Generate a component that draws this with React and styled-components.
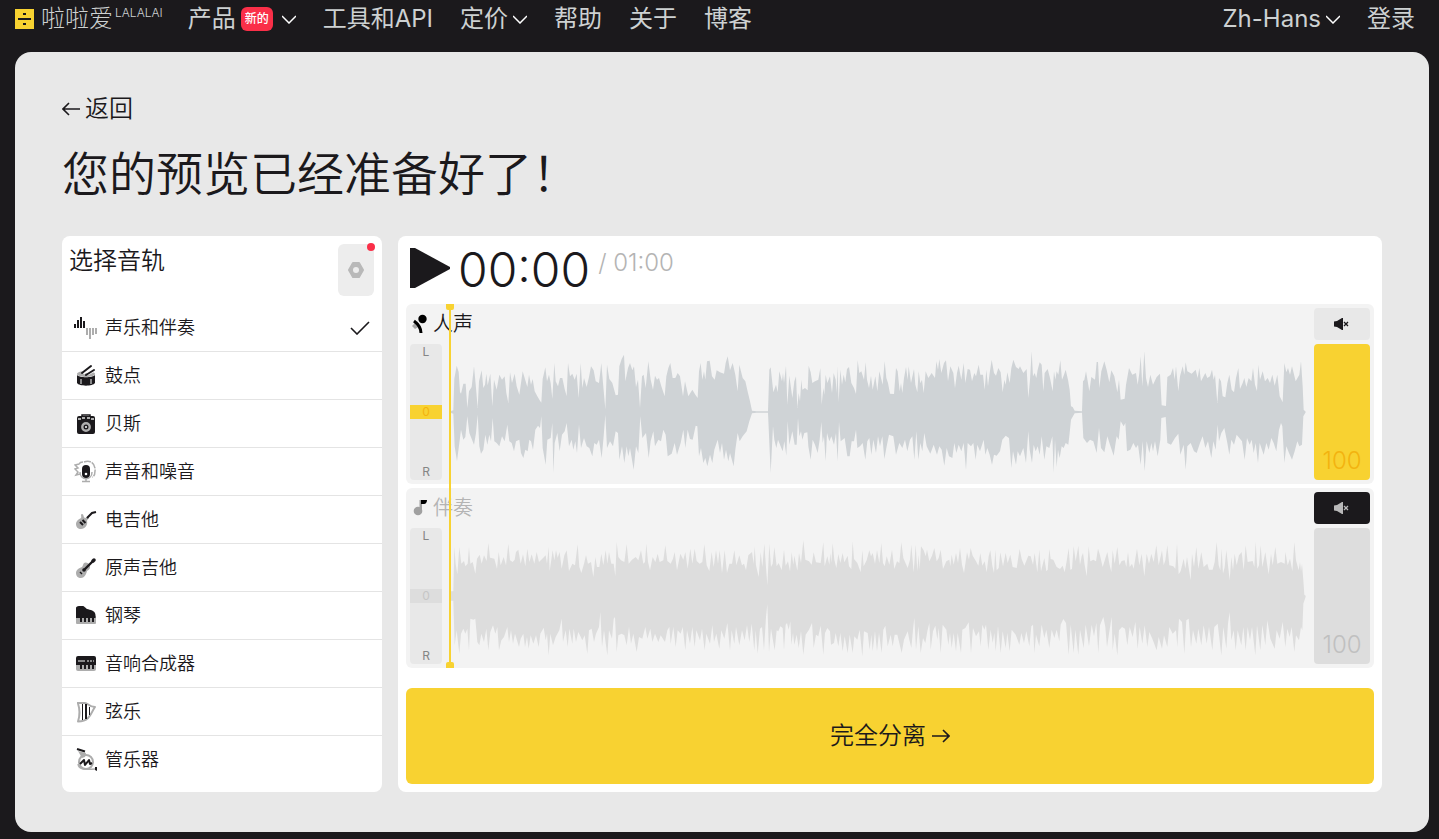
import { useState } from "react";
import styled, { createGlobalStyle, ThemeProvider } from "styled-components";

const theme = {
  ink: "#1b191c",
  page: "#e8e8e8",
  track: "#f3f3f3",
  grey: "#b4b4b4",
  yellow: "#f8d231",
  amber: "#f3b30f",
  red: "#fa2f48",
  nav: "#cdd1d2",
};

const GlobalStyle = createGlobalStyle`
  * {
    box-sizing: border-box;
  }

  body {
    margin: 0;
    background: ${theme.ink};
    color: ${theme.ink};
    font-family: Inter, "Noto Sans CJK SC", sans-serif;
    font-weight: 350;
  }

  button,
  input {
    font: inherit;
    color: inherit;
  }

  svg {
    display: block;
    flex-shrink: 0;
  }
`;

const Header = styled.header`
  display: flex;
  align-items: center;
  justify-content: space-between;
  height: 52px;
  padding: 0 24px 14px 15px;
  color: ${(p) => p.theme.nav};
  font-size: 24px;
  font-weight: 400;
  white-space: nowrap;
`;

const Nav = styled.nav`
  display: flex;
  align-items: center;
  gap: 27px;
`;

const Logo = styled.a`
  display: flex;
  align-items: center;
  gap: 7px;
  margin-right: -2px;
  color: inherit;
  font-weight: 300;
  text-decoration: none;
`;

const LogoText = styled.span`
  display: flex;
  align-items: flex-start;
  gap: 2px;
  line-height: 34px;

  small {
    font-size: 12px;
    line-height: 22px;
  }
`;

const NavLink = styled.a`
  display: flex;
  align-items: center;
  color: inherit;
  line-height: 34px;
  text-decoration: none;
`;

const NavButton = styled.button`
  display: flex;
  align-items: center;
  gap: 5px;
  padding: 0;
  border: 0;
  background: none;
  line-height: 34px;
`;

const Badge = styled.span`
  height: 24px;
  margin-right: 4px;
  padding: 0 4px;
  border-radius: 6px;
  background: ${(p) => p.theme.red};
  color: #fff;
  font-size: 12px;
  font-weight: 500;
  line-height: 24px;
`;

const Card = styled.main`
  margin: 0 10px 7px 15px;
  padding: 41px 47px 40px;
  border-radius: 16px;
  background: ${(p) => p.theme.page};
`;

const Back = styled.a`
  display: inline-flex;
  align-items: center;
  gap: 5px;
  color: inherit;
  font-size: 24px;
  line-height: 32px;
  text-decoration: none;
  vertical-align: top;
`;

const Title = styled.h1`
  margin: 17px 0 30px;
  font-size: 47px;
  font-weight: 350;
  line-height: 64px;
`;

const Columns = styled.div`
  display: grid;
  grid-template-columns: 320px 1fr;
  gap: 16px;
`;

const Panel = styled.section`
  border-radius: 8px;
  background: #fff;
`;

const PanelHead = styled.div`
  display: flex;
  align-items: flex-start;
  justify-content: space-between;
  height: 68px;
  padding: 8px 8px 8px 7px;

  h2 {
    margin: 0;
    font-size: 24px;
    font-weight: 350;
    line-height: 34px;
  }
`;

const Settings = styled.button`
  position: relative;
  display: grid;
  place-items: center;
  width: 36px;
  height: 52px;
  padding: 0;
  border: 0;
  border-radius: 6px;
  background: #ededed;

  &::after {
    content: "";
    position: absolute;
    top: -1px;
    right: -1px;
    width: 8px;
    height: 8px;
    border-radius: 50%;
    background: ${(p) => p.theme.red};
  }
`;

const StemList = styled.ul`
  margin: 0;
  padding: 0 0 8px;
  list-style: none;

  li + li {
    border-top: 1px solid #e4e4e4;
  }
`;

const Stem = styled.label`
  position: relative;
  display: flex;
  align-items: center;
  gap: 7px;
  height: 47px;
  padding: 0 12px;
  font-size: 18px;
  line-height: 24px;
  cursor: pointer;

  input {
    position: absolute;
    opacity: 0;
  }

  span {
    flex: 1;
  }
`;

const Player = styled(Panel)`
  padding: 8px;
`;

const Transport = styled.div`
  display: flex;
  align-items: flex-start;
  gap: 8px;
  height: 60px;
  padding: 4px;
`;

const PlayButton = styled.button`
  padding: 0;
  border: 0;
  background: none;
`;

const Time = styled.span`
  font-size: 48px;
  font-weight: 300;
  line-height: 44px;
`;

const Total = styled.span`
  color: ${(p) => p.theme.grey};
  font-size: 24px;
  font-weight: 300;
  line-height: 30px;
`;

const Tracks = styled.div`
  position: relative;
  display: grid;
  gap: 4px;
`;

const Playhead = styled.div`
  position: absolute;
  top: 0;
  bottom: 0;
  left: 43px;
  width: 2px;
  background: ${(p) => p.theme.yellow};

  &::before,
  &::after {
    content: "";
    position: absolute;
    left: -3px;
    width: 8px;
    height: 6px;
    background: ${(p) => p.theme.yellow};
  }

  &::before {
    top: 0;
    border-radius: 0 0 2px 2px;
  }

  &::after {
    bottom: 0;
    border-radius: 2px 2px 0 0;
  }
`;

const TrackBox = styled.div`
  display: grid;
  grid-template-columns: 32px 1fr 56px;
  grid-template-rows: 32px 136px;
  gap: 4px 8px;
  padding: 4px;
  border-radius: 6px;
  background: ${(p) => p.theme.track};
`;

const TrackName = styled.div`
  grid-column: 1 / 3;
  display: flex;
  align-items: center;
  gap: 5px;
  padding-left: 2px;
  color: ${(p) => (p.$muted ? p.theme.grey : p.theme.ink)};
  font-size: 20px;
  line-height: 28px;
`;

const MuteButton = styled.button`
  display: grid;
  place-items: center;
  padding: 0;
  border: 0;
  border-radius: 4px;
  background: ${(p) => (p.$muted ? p.theme.ink : "#e8e8e8")};
  color: ${(p) => (p.$muted ? "#b9b9b9" : p.theme.ink)};
`;

const Slider = styled.input`
  position: absolute;
  inset: 0;
  width: 100%;
  height: 100%;
  margin: 0;
  opacity: 0;
  writing-mode: vertical-lr;
  cursor: pointer;
`;

const Pan = styled.label`
  position: relative;
  display: flex;
  flex-direction: column;
  align-items: stretch;
  justify-content: space-between;
  border-radius: 4px;
  background: #e8e8e8;
  color: #858585;
  font-size: 12px;
  font-weight: 400;
  line-height: 16px;
  text-align: center;

  b {
    background: ${(p) => (p.$muted ? "#dddddd" : p.theme.yellow)};
    color: ${(p) => (p.$muted ? "#c6c6c6" : p.theme.amber)};
    font-weight: 400;
    line-height: 14px;
  }
`;

const Volume = styled.label`
  position: relative;
  display: flex;
  align-items: flex-end;
  justify-content: center;
  padding-bottom: 3px;
  border-radius: 4px;
  background: ${(p) => (p.$muted ? "#dddddd" : p.theme.yellow)};
  color: ${(p) => (p.$muted ? "#c0c0c0" : p.theme.amber)};
  font-size: 24px;
  font-weight: 300;
  line-height: 32px;
`;

const Wave = styled.svg`
  width: 100%;
  height: 136px;
  fill: ${(p) => (p.$muted ? "#dddddd" : "#cfd3d6")};
`;

const SplitButton = styled.button`
  display: flex;
  align-items: center;
  justify-content: center;
  gap: 6px;
  width: 100%;
  height: 96px;
  margin-top: 20px;
  border: 0;
  border-radius: 6px;
  background: ${(p) => p.theme.yellow};
  font-size: 24px;
  line-height: 32px;
`;

// Each wave is a list of "x,height" points above and below the centre line.
const vocalWave = {
  top: `3,3 10,5 13,100 20,139 26,120 30,60 33,55 40,85 47,85 52,12 57,62 65,75 72,137 78,72 83,12 87,92 95,125 100,72 105,82 109,115 113,80 121,115 127,17 132,97 140,67 148,112 156,97 164,107 169,57 175,27 180,119 186,87 194,115 200,77 208,52 218,122 224,102 232,75 237,112 243,82 248,99 254,62 262,47 270,34 274,28 278,99 286,134 291,92 297,112 302,87 307,40 313,147 317,92 324,77 330,102 337,102 344,69 350,47 354,147 360,107 367,115 374,97 380,115 386,42 392,147 397,72 402,102 410,75 417,105 423,137 431,125 437,92 447,87 454,147 459,87 466,8 471,142 478,99 487,87 497,50 504,52 508,137 515,159 522,172 526,92 534,132 540,147 547,125 552,137 558,75 564,97 570,12 576,107 581,112 587,72 595,152 602,97 609,67 615,109 621,97 627,102 634,77 644,47 649,107 655,132 661,147 668,102 676,102 683,117 690,107 699,47 705,92 715,47 727,67 736,52 743,42 747,122 752,147 757,97 762,122 766,97 771,152 779,154 786,107 794,97 800,125 810,119 822,115 827,147 833,167 840,125 848,147 856,112 863,62 868,142 878,102 886,92 894,57 900,32 906,4 920,2 954,2 958,127 962,134 970,59 978,82 983,59 988,122 996,92 999,117 1002,87 1008,139 1012,22 1018,109 1027,42 1033,92 1038,107 1042,12 1046,57 1050,32 1054,97 1057,67 1065,72 1073,65 1076,139 1082,119 1087,87 1095,92 1105,97 1111,132 1115,22 1120,72 1123,52 1127,112 1132,87 1140,107 1146,57 1151,117 1157,97 1160,57 1162,137 1166,30 1171,127 1176,82 1181,112 1186,89 1191,129 1197,135 1204,87 1212,72 1218,54 1223,155 1228,117 1234,122 1242,97 1247,149 1251,97 1257,72 1263,109 1268,67 1276,107 1282,62 1288,122 1298,82 1304,152 1309,102 1314,87 1320,55 1332,54 1338,132 1343,122 1349,62 1353,87 1357,57 1362,102 1368,135 1373,97 1376,137 1383,87 1392,129 1396,82 1402,59 1406,122 1411,86 1416,97 1421,57 1427,122 1435,102 1445,117 1455,102 1459,152 1464,127 1468,159 1474,117 1482,147 1488,155 1494,92 1501,137 1510,117 1515,72 1521,117 1526,139 1534,97 1541,147 1546,87 1553,129 1560,127 1566,92 1573,117 1578,107 1586,142 1591,112 1599,112 1604,67 1609,127 1614,77 1619,117 1625,157 1632,117 1638,109 1645,132 1652,119 1658,59 1663,97 1667,82 1672,119 1679,87 1684,132 1690,157 1698,135 1706,129 1710,137 1720,117 1730,129 1735,42 1740,97 1745,182 1749,107 1754,117 1759,102 1763,127 1769,149 1775,142 1780,62 1784,117 1793,129 1800,102 1808,62 1812,122 1816,97 1820,122 1825,112 1831,155 1836,97 1842,112 1847,127 1854,97 1859,67 1863,17 1868,15 1874,4 1896,2 1899,92 1903,97 1908,122 1914,87 1918,62 1924,105 1935,97 1940,150 1944,150 1948,72 1954,122 1963,152 1970,127 1978,89 1984,125 1993,107 2002,59 2007,97 2012,37 2024,40 2028,82 2037,132 2047,112 2058,117 2063,82 2068,117 2072,167 2077,77 2083,182 2088,102 2094,75 2101,112 2109,82 2120,105 2130,115 2135,20 2148,18 2152,105 2162,112 2169,132 2174,97 2178,137 2185,62 2190,107 2198,137 2203,112 2207,149 2212,122 2225,115 2237,127 2243,102 2248,132 2253,92 2266,117 2272,102 2280,107 2286,127 2291,97 2295,112 2302,27 2307,102 2313,92 2318,47 2326,44 2332,87 2338,112 2345,67 2352,59 2358,102 2365,132 2370,69 2378,87 2383,102 2389,75 2396,102 2404,92 2409,132 2415,82 2421,62 2425,142 2430,97 2438,122 2445,92 2453,102 2460,87 2467,112 2474,79 2482,112 2489,47 2498,29 2503,147 2509,119 2514,132 2520,112 2526,137 2537,92 2548,112 2553,152 2558,77 2561,7 2567,1`,
  bottom: `3,3 10,5 14,103 21,148 28,93 33,53 40,83 46,75 52,13 58,63 72,98 78,63 83,8 88,103 93,125 100,113 106,68 112,98 118,68 123,88 128,18 133,88 140,93 148,103 156,73 164,88 172,38 178,88 185,93 192,118 198,88 208,83 213,123 220,138 226,113 233,118 238,83 243,88 249,113 256,53 264,41 270,48 274,13 278,108 287,158 292,83 302,78 307,33 310,183 314,93 322,63 329,118 336,68 344,58 350,33 357,103 365,83 370,113 376,88 381,123 387,38 393,108 402,78 410,103 418,108 427,133 433,93 440,98 447,83 455,138 461,73 466,8 471,108 480,88 489,103 497,58 504,63 508,143 516,103 523,153 530,103 535,133 540,108 551,173 558,103 565,123 571,13 577,78 588,63 596,138 602,88 610,58 615,103 625,83 633,88 640,53 647,68 653,133 665,125 674,93 681,128 692,93 700,53 706,108 713,53 720,81 728,83 737,41 742,43 747,133 753,108 760,153 766,138 772,163 780,128 787,153 793,113 803,83 810,123 816,93 822,143 828,113 835,148 840,123 851,163 856,113 863,63 869,88 878,73 890,58 898,28 906,4 920,2 954,2 958,93 962,183 969,43 973,83 979,108 984,83 998,118 1003,88 1009,131 1013,28 1018,98 1027,58 1034,98 1040,98 1044,18 1048,73 1053,58 1057,83 1063,63 1072,61 1075,103 1082,143 1088,83 1095,98 1103,123 1109,83 1114,30 1118,93 1122,73 1127,148 1131,63 1138,88 1144,73 1152,98 1158,63 1163,148 1167,30 1172,88 1184,78 1192,133 1199,133 1205,88 1212,88 1218,53 1222,108 1230,103 1238,93 1246,143 1252,88 1258,78 1264,128 1270,83 1278,123 1284,73 1290,103 1297,73 1303,141 1309,108 1317,68 1330,73 1338,128 1348,93 1357,108 1365,83 1372,118 1380,83 1387,73 1393,143 1399,58 1405,143 1411,93 1417,118 1423,63 1430,103 1441,125 1451,98 1461,128 1468,103 1475,113 1483,161 1490,108 1497,133 1507,138 1513,93 1519,123 1526,98 1534,118 1541,93 1548,173 1553,93 1563,103 1570,93 1577,143 1582,98 1590,118 1601,83 1606,128 1612,108 1619,128 1626,158 1632,128 1640,131 1650,118 1657,83 1667,71 1677,78 1684,168 1689,118 1698,158 1703,118 1710,133 1720,108 1728,153 1735,58 1739,113 1746,153 1751,98 1757,118 1763,103 1769,128 1775,73 1783,143 1789,103 1798,108 1807,73 1811,183 1815,83 1820,165 1824,113 1829,138 1835,103 1841,108 1847,93 1855,98 1859,63 1863,23 1874,4 1896,2 1900,78 1911,93 1920,83 1930,88 1940,123 1947,48 1953,108 1963,121 1972,73 1980,98 1991,131 2000,73 2006,83 2012,28 2021,43 2026,33 2031,118 2041,113 2050,93 2058,108 2064,98 2072,158 2078,88 2084,178 2090,88 2098,123 2104,93 2109,118 2115,88 2123,133 2131,83 2134,18 2147,15 2152,93 2163,98 2175,78 2185,65 2191,128 2201,98 2207,173 2212,103 2222,93 2232,118 2240,123 2250,93 2258,73 2266,108 2274,88 2284,138 2290,88 2297,113 2303,38 2307,88 2314,63 2323,48 2332,93 2338,128 2344,83 2352,98 2360,68 2368,78 2376,88 2384,143 2391,78 2399,98 2405,83 2411,123 2417,93 2424,153 2429,93 2441,128 2449,93 2456,113 2464,78 2471,93 2479,118 2487,53 2493,33 2497,43 2503,153 2509,103 2517,123 2526,143 2534,118 2542,88 2548,103 2556,98 2560,13 2567,1`,
};

const backingWave = {
  top: `3,14 10,14 13,147 17,97 22,65 28,147 34,97 42,105 46,89 53,97 57,147 61,97 68,102 76,67 81,112 89,124 95,97 102,122 110,105 115,159 120,115 133,112 141,82 146,132 152,92 161,117 168,92 175,157 180,107 188,102 194,109 198,132 205,139 212,97 219,125 226,89 232,142 238,102 245,125 253,97 260,132 267,102 277,112 287,122 291,97 296,147 299,75 303,102 308,137 313,107 318,137 323,115 329,132 335,82 343,122 350,137 357,75 367,97 375,92 383,155 388,87 394,69 402,97 408,122 414,97 423,102 430,57 436,117 441,87 448,87 454,127 460,92 467,137 472,97 477,132 484,97 491,97 496,59 500,162 505,117 513,107 523,102 530,155 536,97 546,109 557,117 565,107 573,137 580,97 585,102 589,157 594,102 600,77 608,117 616,102 623,127 629,102 640,107 646,152 652,105 662,97 669,112 674,132 681,77 691,127 700,109 706,132 713,82 721,142 727,97 734,142 740,105 749,97 757,102 763,155 770,92 778,75 785,132 791,87 798,137 804,97 809,137 816,69 824,137 831,69 838,97 846,97 853,137 859,92 868,122 876,92 882,97 888,77 895,122 906,132 911,97 914,149 918,92 926,57 932,132 937,87 943,157 948,87 952,32 958,157 963,87 968,97 973,147 980,89 986,99 995,77 1002,139 1007,91 1014,104 1020,74 1025,131 1030,94 1033,121 1042,76 1047,129 1053,99 1060,167 1066,109 1077,104 1085,94 1091,131 1098,101 1112,99 1120,161 1124,89 1132,119 1138,94 1141,129 1144,99 1148,159 1153,109 1159,84 1165,126 1171,99 1178,129 1183,101 1193,121 1197,89 1204,81 1208,164 1212,111 1222,99 1232,71 1237,137 1241,89 1250,107 1258,137 1263,119 1268,129 1275,97 1281,137 1288,99 1294,159 1299,99 1304,89 1310,119 1318,94 1326,139 1333,81 1341,104 1348,99 1354,161 1360,114 1373,84 1380,109 1384,154 1391,71 1397,154 1402,75 1406,124 1409,79 1413,149 1421,137 1427,119 1431,139 1438,104 1446,121 1453,144 1460,104 1466,114 1472,139 1479,81 1489,104 1498,109 1501,89 1505,124 1511,94 1518,129 1524,99 1530,144 1536,94 1542,69 1551,131 1557,109 1562,144 1568,121 1578,104 1585,91 1591,129 1597,91 1604,104 1610,71 1616,119 1621,137 1627,91 1632,69 1636,139 1640,77 1646,84 1651,131 1659,89 1667,129 1673,99 1681,124 1688,87 1700,84 1709,141 1715,111 1723,91 1735,121 1742,119 1749,94 1754,129 1762,71 1768,139 1773,74 1783,114 1789,74 1793,79 1798,141 1802,111 1810,109 1820,87 1830,81 1838,91 1844,71 1850,104 1856,144 1861,79 1866,81 1871,149 1877,104 1885,151 1890,94 1895,119 1899,129 1904,94 1910,59 1916,149 1921,104 1930,109 1938,104 1944,142 1950,122 1958,87 1972,132 1978,97 1984,72 1988,137 1994,97 2002,147 2008,92 2015,105 2024,107 2029,87 2034,132 2039,87 2046,97 2051,82 2061,142 2068,92 2075,127 2083,59 2090,127 2097,97 2104,127 2111,102 2119,152 2126,92 2136,137 2141,92 2146,107 2152,152 2158,92 2170,89 2176,82 2181,157 2186,65 2192,75 2201,112 2206,82 2211,117 2222,47 2226,127 2232,87 2239,147 2245,82 2254,132 2261,87 2272,97 2277,79 2288,79 2294,102 2300,162 2306,92 2311,77 2315,142 2319,67 2324,87 2329,137 2339,47 2344,117 2349,77 2354,127 2360,92 2367,122 2375,132 2381,77 2387,152 2393,102 2408,105 2413,87 2417,162 2422,82 2427,92 2432,152 2437,87 2446,132 2451,97 2456,65 2463,127 2468,92 2476,147 2482,97 2493,102 2504,97 2506,132 2513,92 2520,112 2527,75 2533,162 2538,107 2546,77 2550,102 2553,75 2556,97 2560,47 2563,4 2567,1`,
  bottom: `3,14 10,14 14,148 20,103 28,173 33,113 40,98 46,113 52,98 57,163 61,68 70,71 76,68 82,138 88,148 94,113 102,138 109,98 115,163 121,108 129,88 136,113 142,93 147,163 154,133 162,123 172,93 177,138 183,103 189,143 195,113 207,153 212,128 220,113 225,153 231,123 236,158 242,118 250,143 258,118 266,153 271,113 281,95 287,133 291,113 296,178 301,113 309,148 317,123 328,103 335,68 339,138 347,103 353,153 358,98 367,143 371,98 378,138 385,108 397,133 404,118 412,173 417,103 425,98 432,138 438,113 447,93 451,48 456,153 462,103 472,178 477,103 486,128 491,68 495,63 500,168 505,118 515,113 523,118 530,148 537,93 543,143 550,113 560,168 567,123 577,128 586,93 592,128 601,98 607,138 615,113 625,138 632,118 645,138 652,103 658,93 662,143 670,93 677,153 683,103 692,113 698,93 706,163 711,103 720,143 727,93 734,153 739,103 750,133 756,98 764,163 769,113 780,143 787,88 792,138 799,113 808,158 814,103 823,128 832,81 840,163 845,103 853,143 858,93 868,148 876,103 884,133 891,88 898,138 905,83 913,163 917,103 923,173 930,98 936,93 942,163 948,63 952,25 957,168 963,98 974,163 980,103 985,106 991,91 998,96 1002,161 1007,86 1011,81 1016,101 1021,76 1024,146 1029,111 1033,146 1040,116 1046,156 1053,106 1060,176 1067,116 1077,101 1086,81 1091,156 1098,116 1105,121 1112,89 1120,176 1125,111 1132,96 1140,106 1143,146 1152,141 1157,111 1165,151 1171,111 1178,166 1184,121 1193,171 1199,116 1208,171 1213,121 1222,131 1229,101 1237,181 1242,106 1253,111 1259,161 1264,116 1268,166 1275,106 1281,166 1287,111 1295,171 1300,101 1306,89 1313,151 1322,116 1328,151 1334,116 1342,116 1355,171 1362,131 1373,106 1378,131 1384,156 1389,101 1393,66 1398,161 1405,91 1412,171 1419,126 1426,141 1432,106 1438,81 1442,161 1449,106 1456,89 1462,131 1466,96 1472,171 1478,86 1489,101 1495,146 1500,111 1505,156 1511,111 1518,166 1523,111 1533,171 1537,101 1546,96 1556,79 1563,171 1569,96 1578,121 1587,106 1592,151 1597,86 1603,101 1608,86 1615,161 1622,101 1628,141 1633,111 1637,166 1644,91 1652,171 1658,106 1667,156 1672,111 1679,166 1685,101 1697,116 1708,146 1714,111 1722,141 1729,106 1738,151 1744,91 1749,86 1753,171 1758,116 1768,151 1775,86 1783,126 1789,101 1798,156 1805,101 1813,126 1820,101 1828,136 1832,86 1840,69 1848,81 1856,176 1862,86 1871,171 1876,101 1885,176 1890,101 1901,156 1907,86 1917,151 1925,86 1932,121 1939,81 1945,171 1950,88 1960,63 1966,93 1971,153 1977,113 1985,63 1988,163 1994,113 2002,178 2007,103 2016,93 2025,98 2032,148 2039,93 2048,123 2056,78 2063,158 2069,93 2077,143 2084,88 2092,153 2098,108 2107,128 2120,163 2126,123 2136,158 2142,118 2152,153 2158,93 2168,113 2178,103 2182,153 2187,68 2196,78 2203,173 2209,73 2216,68 2223,153 2229,103 2239,143 2245,98 2254,148 2261,88 2270,143 2277,93 2287,163 2293,93 2303,83 2314,178 2320,93 2329,158 2334,83 2339,48 2344,133 2351,103 2357,163 2363,103 2374,148 2380,93 2387,163 2393,93 2400,133 2406,93 2416,178 2421,88 2431,163 2437,88 2446,148 2452,73 2461,128 2474,158 2480,103 2489,128 2498,78 2506,153 2512,98 2519,123 2525,93 2533,168 2538,118 2547,133 2553,93 2557,103 2560,23 2567,2`,
};

const parse = (list) => list.split(" ").map((pair) => pair.split(",").map(Number));

const outline = ({ top, bottom }) => {
  const upper = parse(top).map(([x, h]) => `${x},${-h}`);
  const lower = parse(bottom).reverse().map(([x, h]) => `${x},${h}`);
  return [...upper, ...lower].join(" ");
};

const dark = theme.ink;
const soft = "#adadad";

const icons = {
  vocals: (
    <>
      <path fill={dark} d="M0 8h2v4H0zM3 4h2v8H3zM6 1h2v11H6zM9 5h2v7H9z" />
      <path fill={soft} d="M12 12h2v7h-2zM15 12h2v11h-2zM18 12h2v7h-2zM21 12h2v6h-2z" />
    </>
  ),
  drums: (
    <>
      <path fill={soft} d="M3 10C3 6 21 6 21 10s-18 4-18 0z" />
      <path fill={dark} d="M3 11c2 3 16 3 18 0v8c-2 3.500-16 3.500-18 0z" />
      <path stroke={soft} strokeWidth="1.500" d="M7 15v5M17 15v5" />
      <path stroke="#fff" strokeWidth="3.500" d="m9 9 8-6M13 10l7-4" />
      <path stroke={dark} strokeWidth="2" strokeLinecap="round" d="m8 9 9-7M12 11l8-5" />
    </>
  ),
  bass: (
    <>
      <path fill="none" stroke={dark} strokeWidth="1.500" d="M8 5V3h8v2" />
      <path fill={dark} d="M5 4h14a2 2 0 0 1 2 2v14a2 2 0 0 1-2 2H5a2 2 0 0 1-2-2V6a2 2 0 0 1 2-2z" />
      <path fill={soft} d="M4 6h3v2H4zM8 5h3v2H8zM13 5h3v2h-3zM17 6h3v2h-3z" />
      <circle cx="12" cy="15" r="3.700" fill="none" stroke={soft} strokeWidth="2.400" />
      <circle cx="12" cy="15" r="1" fill="#fff" />
    </>
  ),
  voice: (
    <>
      <path fill="none" stroke={soft} strokeWidth="1.500" d="M9 2C6 2 5 4 5 4L1 5l3 3-3 1 3 3-2 3 4-1" />
      <path fill="none" stroke={soft} strokeWidth="1.500" strokeDasharray="7 1" d="M10 2c7-3 12 3 11 9 0 5-2 6-3 6" />
      <path fill="none" stroke={soft} strokeWidth="1.500" d="M6 12c0 9 12 9 12 0M12 18v4M8 21.500h8" />
      <rect x="8" y="5" width="8" height="13" rx="4" fill={dark} />
      <circle cx="12" cy="14" r="1.300" fill="#fff" />
    </>
  ),
  electric: (
    <>
      <path fill={soft} d="M8 6c2 0 1 3 3 4 2 0 4-2 4 0 0 1-2 1-2 3 1 4-2 8-6 8-3 0-5-2-5-5s3-5 5-6c1-1-1-4 1-4z" />
      <path stroke={soft} strokeWidth="2" d="m10 14 4-5" />
      <path stroke={dark} strokeWidth="2" d="m13 10 5-5 4-1" fill="none" />
      <path stroke={dark} strokeWidth="2" d="m8.500 12 3 3M6 14l3 3" />
    </>
  ),
  acoustic: (
    <>
      <path fill={soft} d="M10 7c3-2 7 2 6 5-1 2-2 2-3 3-1 4-3 7-6 7-3 0-5-2-5-5s3-5 6-6c1-1 1-3 2-4z" />
      <circle cx="10" cy="14" r="1.800" fill={dark} />
      <path stroke={dark} strokeWidth="2.400" d="m10 14 9-9" />
      <path stroke={dark} strokeWidth="3.500" strokeLinecap="round" d="m19 5 1-1" />
      <path stroke={dark} strokeWidth="1.500" d="m6 16 2 2" />
    </>
  ),
  piano: (
    <>
      <path fill={soft} d="M2 12h20v7a1 1 0 0 1-1 1H3a1 1 0 0 1-1-1z" />
      <path fill={dark} d="M2 14V4c0-1 1-2 3-2h3c3 0 3 2 5 3 3 1 8 1 8.500 6v3H20v4h-2v-4h-2v4h-2v-4h-2v4h-2v-4H8v4H6v-4H4v0z" />
    </>
  ),
  synth: (
    <>
      <path fill={soft} d="M2 12h20v5a2 2 0 0 1-2 2H4a2 2 0 0 1-2-2z" />
      <path fill={dark} d="M4 4h16a2 2 0 0 1 2 2v7h-2v4h-2v-4h-2v4h-2v-4h-2v4h-2v-4H8v4H6v-4H2V6a2 2 0 0 1 2-2z" />
      <path stroke={soft} strokeWidth="1.500" d="M4 9h7M13 9h2M16 9h2M19 9h1" />
    </>
  ),
  strings: (
    <>
      <path fill="none" stroke={soft} strokeWidth="2" strokeLinejoin="round" d="M3 3h8c3 0 4 4 10 4-3 4-3 7-7 11-2 2-5 3.500-10 3.500 2-6 2-12 0-18" />
      <path fill={dark} d="M8 4h1v16H8zM11 4h2v15h-2zM15 7h1v8h-1z" />
    </>
  ),
  wind: (
    <>
      <path fill={soft} d="m4 3 8 2-1 4-3 1z" />
      <path stroke={dark} strokeWidth="2" d="m3 1 8 2.500" />
      <circle cx="12" cy="14" r="7" fill="none" stroke={soft} strokeWidth="2" />
      <path fill="none" stroke={soft} strokeWidth="1.500" d="M4 16c1 5 5 6 17 5" />
      <path fill="none" stroke={dark} strokeWidth="2" strokeLinejoin="round" d="m6 16 4-4 1 5 4-5 1 4 2-1" />
      <path fill={dark} d="M21 19h2v4l-2-1z" />
    </>
  ),
};

const stems = [
  ["vocals", "声乐和伴奏"],
  ["drums", "鼓点"],
  ["bass", "贝斯"],
  ["voice", "声音和噪音"],
  ["electric", "电吉他"],
  ["acoustic", "原声吉他"],
  ["piano", "钢琴"],
  ["synth", "音响合成器"],
  ["strings", "弦乐"],
  ["wind", "管乐器"],
];

const Chevron = () => (
  <svg width="14" height="9" viewBox="0 0 14 9" fill="none" stroke="#fff" strokeWidth="1.500">
    <path d="m0 1 7 7 7-7" />
  </svg>
);

const Arrow = ({ left }) => (
  <svg width="18" height="14" viewBox="0 0 18 14" fill="none" stroke={dark} strokeWidth="1.600">
    <path d={left ? "M18 7H1M7 1 1 7l6 6" : "M0 7h17M11 1l6 6-6 6"} />
  </svg>
);

const MuteIcon = () => (
  <svg width="16" height="12" viewBox="0 0 16 12" fill="currentColor">
    <path d="M0 3.500 3 3l5-3h1v12H8L3 9 0 8.500z" />
    <path d="m10 4 4 4M14 4l-4 4" stroke="currentColor" strokeWidth="1.300" />
  </svg>
);

const MicIcon = () => (
  <svg width="16" height="20" viewBox="0 0 16 20">
    <path fill="#a8a8a8" d="m5 7 3 5-5 3-3-3z" />
    <circle cx="10.500" cy="5" r="4.200" fill="#000" />
    <path fill="none" stroke="#000" strokeWidth="3" d="M2 7c4 3 7 6 7 12" />
  </svg>
);

const NoteIcon = () => (
  <svg width="16" height="20" viewBox="0 0 16 20">
    <circle cx="6" cy="13" r="4.300" fill="#a0a0a0" />
    <path fill="#a0a0a0" d="M7.500 2H10v11H7.500z" />
    <path d="M9 2h6c0 2-1 4-3 4H9z" />
  </svg>
);

function Track({ name, icon, wave, muted, onMute }) {
  return (
    <TrackBox>
      <TrackName $muted={muted}>
        {icon}
        {name}
      </TrackName>
      <MuteButton $muted={muted} onClick={onMute} aria-label="静音">
        <MuteIcon />
      </MuteButton>
      <Pan $muted={muted}>
        <span>L</span>
        <b>0</b>
        <span>R</span>
        <Slider type="range" min="-100" max="100" defaultValue="0" aria-label={`${name} L R`} />
      </Pan>
      <Wave viewBox="0 -204 2568 408" preserveAspectRatio="none" $muted={muted}>
        <polygon points={outline(wave)} />
      </Wave>
      <Volume $muted={muted}>
        100
        <Slider type="range" min="0" max="100" defaultValue="100" aria-label={`${name} 音量`} />
      </Volume>
    </TrackBox>
  );
}

function App() {
  const [stem, setStem] = useState("vocals");
  const [muted, setMuted] = useState({ vocals: false, backing: true });

  const toggle = (key) => setMuted({ ...muted, [key]: !muted[key] });

  return (
    <ThemeProvider theme={theme}>
      <GlobalStyle />
      <Header>
        <Nav>
          <Logo href="#">
            <svg width="19" height="20" viewBox="0 0 19 20">
              <path fill={theme.yellow} d="M0 0h19v20H0z" />
              <path fill={dark} d="M3 9h13v2H3zM8 4h3v2H8zM8 14h3v2H8z" />
            </svg>
            <LogoText>
              啦啦爱<small>LALALAI</small>
            </LogoText>
          </Logo>
          <NavButton>
            产品
            <Badge>新的</Badge>
            <Chevron />
          </NavButton>
          <NavLink href="#">工具和API</NavLink>
          <NavButton>
            定价
            <Chevron />
          </NavButton>
          <NavLink href="#">帮助</NavLink>
          <NavLink href="#">关于</NavLink>
          <NavLink href="#">博客</NavLink>
        </Nav>
        <Nav>
          <NavButton>
            Zh-Hans
            <Chevron />
          </NavButton>
          <NavLink href="#">登录</NavLink>
        </Nav>
      </Header>

      <Card>
        <Back href="#">
          <Arrow left />
          返回
        </Back>
        <Title>您的预览已经准备好了！</Title>

        <Columns>
          <Panel>
            <PanelHead>
              <h2>选择音轨</h2>
              <Settings aria-label="设置">
                <svg width="16" height="16" viewBox="0 0 16 16">
                  <path
                    fill="#b9b9b9"
                    stroke="#b9b9b9"
                    strokeWidth="2"
                    strokeLinejoin="round"
                    d="M5 1h6l4 7-4 7H5L1 8z"
                  />
                  <circle cx="8" cy="8" r="3" fill="#ededed" />
                </svg>
              </Settings>
            </PanelHead>
            <StemList>
              {stems.map(([id, label]) => (
                <li key={id}>
                  <Stem>
                    <input type="radio" name="stem" checked={stem === id} onChange={() => setStem(id)} />
                    <svg width="24" height="24" viewBox="0 0 24 24">
                      {icons[id]}
                    </svg>
                    <span>{label}</span>
                    {stem === id && (
                      <svg width="20" height="14" viewBox="0 0 20 14" fill="none" stroke={dark} strokeWidth="1.600">
                        <path d="m1 7 6 6L19 1" />
                      </svg>
                    )}
                  </Stem>
                </li>
              ))}
            </StemList>
          </Panel>

          <Player>
            <Transport>
              <PlayButton aria-label="播放">
                <svg width="40" height="40" viewBox="0 0 40 40" fill={dark}>
                  <path d="M0 0h5l35 19v2L5 40H0z" />
                </svg>
              </PlayButton>
              <Time>00:00</Time>
              <Total>/ 01:00</Total>
            </Transport>
            <Tracks>
              <Track
                name="人声"
                icon={<MicIcon />}
                wave={vocalWave}
                muted={muted.vocals}
                onMute={() => toggle("vocals")}
              />
              <Track
                name="伴奏"
                icon={<NoteIcon />}
                wave={backingWave}
                muted={muted.backing}
                onMute={() => toggle("backing")}
              />
              <Playhead />
            </Tracks>
            <SplitButton>
              完全分离
              <Arrow />
            </SplitButton>
          </Player>
        </Columns>
      </Card>
    </ThemeProvider>
  );
}

export default App;
